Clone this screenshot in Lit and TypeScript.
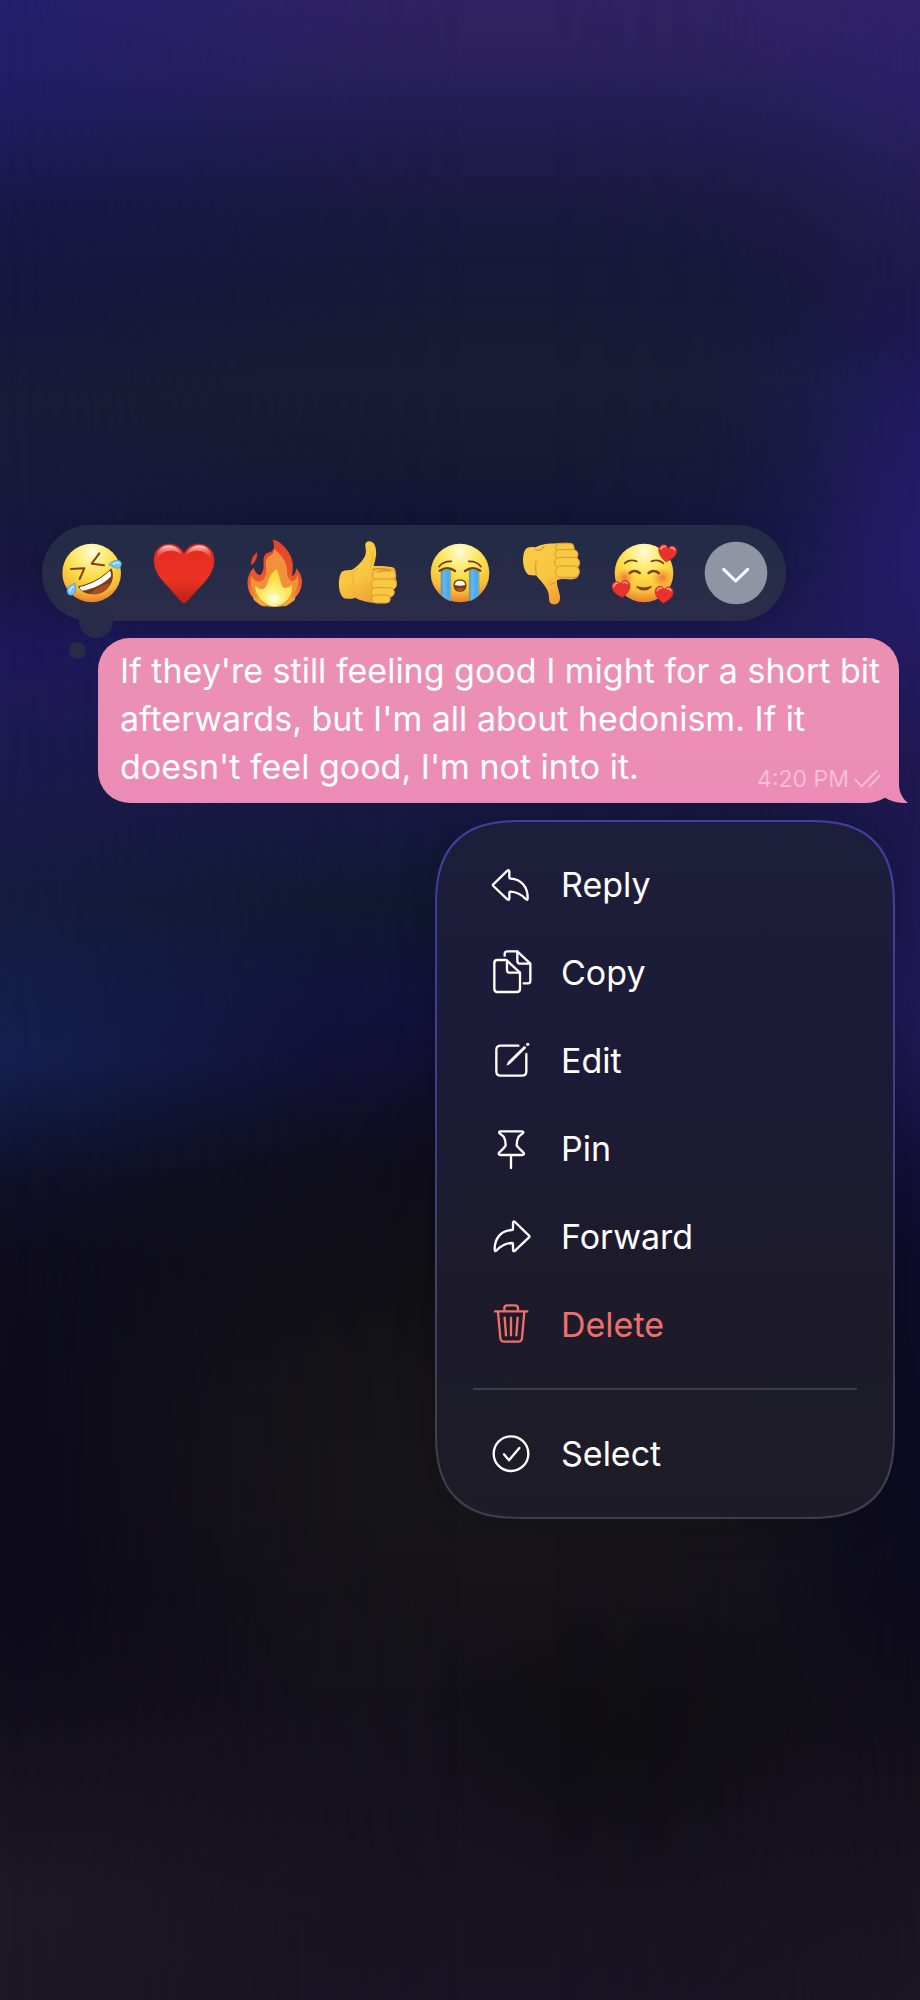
import { LitElement, html, css, svg, nothing, type SVGTemplateResult } from "lit";
import { customElement, property } from "lit/decorators.js";

interface Reaction {
  label: string;
  viewBox: string;
  art: SVGTemplateResult;
}

interface MenuAction {
  label: string;
  viewBox: string;
  art: SVGTemplateResult;
  danger?: boolean;
}

const skin = (id: string) => svg`
  <radialGradient id=${id} cx="0.5" cy="0.14" r="0.88">
    <stop offset="0" stop-color="#fffbdc" />
    <stop offset="0.22" stop-color="#fdf08c" />
    <stop offset="0.5" stop-color="#fbdc45" />
    <stop offset="0.78" stop-color="#f7bb3b" />
    <stop offset="1" stop-color="#e9742a" />
  </radialGradient>`;

const hand = (id: string) => svg`
  <linearGradient id=${id} x1="0" y1="0" x2="0.5" y2="1">
    <stop offset="0" stop-color="#f9cd4a" />
    <stop offset="0.6" stop-color="#f8c640" />
    <stop offset="1" stop-color="#f0a035" />
  </linearGradient>`;

const redHeart = (x: number, y: number, turn: number) => svg`
  <g transform="translate(${x} ${y}) rotate(${turn})">
    <path d="M0 27C-10 20-28 8-27-8C-26-25-7-29 0-14C7-29 26-25 27-8C28 8 10 20 0 27Z" fill="#e8322c" stroke="#c4241f" stroke-width="2" />
    <path d="M-21-9Q-19-19-9-18M8-17Q15-21 20-13" fill="none" stroke="#f79a90" stroke-width="5" stroke-linecap="round" />
  </g>`;

const reactions: Reaction[] = [
  {
    label: "Rolling on the floor laughing",
    viewBox: "78 82 216 216",
    art: svg`
      <defs>${skin("rofl")}</defs>
      <circle cx="185" cy="190" r="88" fill="url(#rofl)" />
      <g fill="none" stroke="#7d4412" stroke-width="6" stroke-linejoin="round" stroke-linecap="round">
        <path d="M208 131L185 162L222 167" />
        <path d="M123 178L163 176L149 208" />
      </g>
      <path d="M144 230C172 226 216 206 244 176C255 199 247 229 222 245C194 261 155 255 144 230Z" fill="#7a3d12" />
      <path d="M149 232C178 226 215 207 239 183Q245 189 243 200C222 223 190 239 156 243Q150 239 149 232Z" fill="#fff" />
      <path d="M182 252C190 238 226 221 243 220C231 246 205 260 182 252Z" fill="#a64d25" />
      <path d="M236 165C249 150 268 149 273 157C277 168 270 177 261 176C252 175 244 168 236 165Z" fill="#76c5f3" stroke="#3b93cf" stroke-width="2" />
      <path d="M135 221C117 226 108 239 112 249C116 258 126 259 132 252C138 244 139 233 135 221Z" fill="#76c5f3" stroke="#3b93cf" stroke-width="2" />
      <path d="M251 163Q260 156 266 160M129 231Q120 238 119 244" fill="none" stroke="#c9ecfd" stroke-width="5" stroke-linecap="round" />`,
  },
  {
    label: "Red heart",
    viewBox: "354 82 216 216",
    art: svg`
      <defs>
        <linearGradient id="heart" x1="0" y1="0" x2="0" y2="1">
          <stop offset="0" stop-color="#e42a22" />
          <stop offset="0.6" stop-color="#ea3323" />
          <stop offset="1" stop-color="#bd2018" />
        </linearGradient>
        <linearGradient id="gloss" x1="0" y1="0" x2="0" y2="1">
          <stop offset="0" stop-color="#ffd9d3" stop-opacity="0.95" />
          <stop offset="1" stop-color="#ee4a3c" stop-opacity="0" />
        </linearGradient>
      </defs>
      <path d="M462 281C449 273 424 241 404 220C384 198 371 176 372 148C373 98 440 85 462 132C484 85 551 98 552 148C553 176 541 198 521 220C500 241 475 273 462 281Z" fill="url(#heart)" stroke="#c3251d" stroke-width="2" />
      <path d="M379 153C380 119 397 107 418 107C438 108 450 121 457 136C436 118 397 115 379 153Z" fill="url(#gloss)" />
      <path d="M545 153C544 119 527 107 506 107C486 108 474 121 467 136C488 118 527 115 545 153Z" fill="url(#gloss)" />`,
  },
  {
    label: "Fire",
    viewBox: "630 82 216 216",
    art: svg`
      <defs>
        <linearGradient id="outer" x1="0" y1="0" x2="0" y2="1">
          <stop offset="0" stop-color="#e5412a" />
          <stop offset="0.65" stop-color="#ea5a2a" />
          <stop offset="1" stop-color="#f3a73b" />
        </linearGradient>
        <radialGradient id="core" cx="0.5" cy="0.8" r="0.6">
          <stop offset="0" stop-color="#fffef0" />
          <stop offset="0.4" stop-color="#fdf07b" />
          <stop offset="1" stop-color="#fbd940" />
        </radialGradient>
      </defs>
      <path d="M727 90C752 90 786 132 788 160Q789 182 786 200Q797 194 799 176C812 190 820 210 814 230Q811 249 796 262Q798 272 783 279C757 296 711 296 684 280Q669 273 669 263C655 250 648 219 656 199Q660 183 671 174Q675 192 691 197Q702 183 701 164C699 148 702 132 714 129Q731 126 732 111Q732 99 727 90Z" fill="url(#outer)" />
      <path d="M681 128C684 144 674 160 664 166Q660 146 681 128Z" fill="#e5452a" />
      <path d="M732 117C752 134 770 154 771 180Q770 204 785 215Q798 214 803 197C811 226 794 258 778 272Q736 300 693 275C670 255 656 225 664 198Q672 215 689 216C708 211 711 187 708 167C706 150 712 141 724 136Q733 131 732 117Z" fill="#f1913a" />
      <path d="M740 179C751 202 750 224 761 235Q774 237 786 225C790 249 776 282 736 290C697 287 674 254 676 226Q684 239 699 239C717 232 710 198 740 179Z" fill="url(#core)" />
      <path d="M668 263Q686 289 707 291L689 266ZM796 262Q779 289 760 291L779 266Z" fill="#f5a637" />`,
  },
  {
    label: "Thumbs up",
    viewBox: "36 82 216 216",
    art: svg`
      <defs>${hand("up")}</defs>
      <path d="M65 187Q73 180 94 181C112 171 134 149 137 132Q139 122 136 108C134 92 157 90 164 106C173 127 167 146 161 169C182 168 201 170 216 172Q230 177 226 191Q231 197 227 207Q233 215 229 226Q226 235 218 237Q226 246 219 256Q213 264 208 265Q213 278 197 281C164 282 128 277 106 264Q91 270 73 266C54 255 52 207 65 187Z" fill="url(#up)" />
      <path d="M157 125Q160 148 153 171M96 187Q108 181 116 174M95 189Q104 224 102 258" fill="none" stroke="#f4b13b" stroke-width="4" />
      <g fill="#f8c943" stroke="#df9631" stroke-width="3">
        <rect x="157" y="179" width="70" height="32" rx="16" />
        <rect x="154" y="208" width="76" height="32" rx="16" />
        <rect x="153" y="234" width="70" height="28" rx="14" />
        <rect x="155" y="256" width="56" height="24" rx="12" />
      </g>
      <path d="M156 180Q183 172 210 181M172 187Q190 181 212 184" fill="none" stroke="#dc922e" stroke-width="4" stroke-linecap="round" />`,
  },
  {
    label: "Loudly crying",
    viewBox: "312 82 216 216",
    art: svg`
      <defs>
        ${skin("cry")}
        <linearGradient id="tear" x1="0" y1="0" x2="1" y2="0">
          <stop offset="0" stop-color="#3f92d5" />
          <stop offset="0.25" stop-color="#64b7f1" />
          <stop offset="0.8" stop-color="#4da5e9" />
          <stop offset="1" stop-color="#6fbbe8" />
        </linearGradient>
      </defs>
      <circle cx="420" cy="190" r="88" fill="url(#cry)" />
      <path d="M363 181H392V274Q375 268 363 257Z" fill="url(#tear)" stroke="#8a9b60" stroke-width="2" />
      <path d="M448 181H477V257Q465 268 448 274Z" fill="url(#tear)" stroke="#8a9b60" stroke-width="2" />
      <g fill="none" stroke="#76400f" stroke-width="7" stroke-linecap="round">
        <path d="M357 171Q369 154 394 155" stroke-width="5" />
        <path d="M483 171Q471 154 446 155" stroke-width="5" />
        <path d="M359 183Q383 167 405 184" />
        <path d="M435 184Q457 167 481 183" />
      </g>
      <path d="M420 209C436 209 441 220 439 231C437 242 430 246 420 246C410 246 403 242 401 231C399 220 404 209 420 209Z" fill="#78400f" />
      <path d="M405 226C405 216 411 213 420 213C429 213 435 216 435 226Q420 230 405 226Z" fill="#fff" />
      <path d="M406 239Q420 231 434 239Q420 250 406 239Z" fill="#aa5127" />`,
  },
  {
    label: "Thumbs down",
    viewBox: "588 82 216 216",
    art: svg`
      <defs>${hand("down")}</defs>
      <path d="M617 118Q625 109 647 113C667 101 699 102 718 101Q741 96 754 103Q766 109 763 122Q777 130 772 147Q783 159 775 174Q783 187 774 201Q765 211 745 209Q724 207 711 211C709 226 717 241 720 260C722 278 712 286 699 284C685 282 688 267 686 254C682 232 663 216 648 197Q637 198 625 195C607 181 604 137 617 118Z" fill="url(#down)" />
      <path d="M646 119Q661 127 672 111M649 154Q643 174 650 194M690 225Q700 217 707 220" fill="none" stroke="#e69b31" stroke-width="4" />
      <g fill="#f8c943" stroke="#df9631" stroke-width="3">
        <rect x="707" y="101" width="55" height="25" rx="12" />
        <rect x="705" y="120" width="69" height="28" rx="14" />
        <rect x="704" y="143" width="75" height="32" rx="16" />
        <rect x="706" y="169" width="72" height="34" rx="17" />
      </g>`,
  },
  {
    label: "Smiling face with hearts",
    viewBox: "54 82 216 216",
    art: svg`
      <defs>
        ${skin("love")}
        <radialGradient id="blush">
          <stop offset="0" stop-color="#f26a2c" stop-opacity="0.85" />
          <stop offset="1" stop-color="#f58a34" stop-opacity="0" />
        </radialGradient>
      </defs>
      <circle cx="162" cy="190" r="88" fill="url(#love)" />
      <circle cx="104" cy="204" r="29" fill="url(#blush)" />
      <circle cx="217" cy="204" r="31" fill="url(#blush)" />
      <g fill="none" stroke="#7b4413" stroke-linecap="round">
        <path d="M104 161Q118 147 140 155" stroke-width="5" />
        <path d="M184 155Q206 147 220 161" stroke-width="5" />
        <path d="M119 190Q133 178 149 190M176 190Q191 178 206 190" stroke-width="8" />
        <path d="M140 231Q162 250 184 231Q162 240 140 231Z" fill="#7b4413" stroke-width="4" />
      </g>
      ${redHeart(232, 130, 10)} ${redHeart(94, 237, -8)} ${redHeart(222, 254, 5)}`,
  },
];

const turnArrow = svg`<path d="M217 253L259 212Q265 208 265 215V232Q265 236 269 236C302 238 320 262 320 293Q320 303 314 297C302 284 288 276 268 275Q265 275 265 278V295Q265 302 259 298L217 258Q214 255 217 253Z" />`;

const actions: MenuAction[] = [
  { label: "Reply", viewBox: "198 183 144 144", art: turnArrow },
  {
    label: "Copy",
    viewBox: "198 447 144 144",
    art: svg`
      <path d="M228 480H256L297 518V567Q297 576 288 576H229Q220 576 220 567V489Q220 480 229 480Z" />
      <path d="M258 482V509Q258 518 267 518H296" />
      <path d="M251 467V462Q251 454 259 454H289L328 491V542Q328 550 320 550H308" />
      <path d="M289 455V482Q289 491 298 491H327" />`,
  },
  {
    label: "Edit",
    viewBox: "198 711 144 144",
    art: svg`
      <path d="M292 737H239Q226 737 226 750V814Q226 827 239 827H303Q316 827 316 814V762" />
      <path d="M256 797L261 785L310 737L316 743L267 792Z" fill="currentColor" stroke="none" />
      <circle cx="320" cy="733" r="5" fill="currentColor" stroke="none" />`,
  },
  {
    label: "Pin",
    viewBox: "198 105 144 144",
    art: svg`
      <path d="M238 124H303Q310 125 305 130L293 140Q287 150 287 166Q291 173 307 187Q312 194 303 195H239Q230 194 235 187Q251 173 254 166Q254 150 248 140L236 130Q232 125 238 124Z" />
      <path d="M270 196V234" />`,
  },
  {
    label: "Forward",
    viewBox: "198 369 144 144",
    art: svg`<g transform="translate(541 184) scale(-1 1)">${turnArrow}</g>`,
  },
  {
    label: "Delete",
    viewBox: "198 633 144 144",
    danger: true,
    art: svg`
      <path d="M222 664H319M250 663V655Q250 646 259 646H282Q291 646 291 655V663" />
      <path d="M231 666L238 744Q239 755 250 755H291Q302 755 303 744L310 666" />
      <path d="M251 683L255 736M270 683V736M290 683L286 736" />`,
  },
  {
    label: "Select",
    viewBox: "198 210 144 144",
    art: svg`<circle cx="270" cy="281" r="52" /><path d="M249 283L264 301L295 264" />`,
  },
];

@customElement("reaction-bar")
class ReactionBar extends LitElement {
  static styles = css`
    :host {
      position: relative;
      display: flex;
      gap: 20px;
      padding: 12px 14px;
      border-radius: 48px;
      background: linear-gradient(#222b46, #2c2c49);
      box-shadow: 0 0 16px rgba(0, 0, 20, 0.12);
    }
    .blob {
      position: absolute;
      border-radius: 50%;
      background: #272b48;
    }
    .large {
      left: 37px;
      bottom: -17px;
      width: 34px;
      height: 34px;
    }
    .small {
      left: 27px;
      bottom: -38px;
      width: 17px;
      height: 17px;
    }
    button {
      position: relative;
      display: block;
      width: 72px;
      height: 72px;
      padding: 0;
      border: 0;
      background: none;
      cursor: pointer;
    }
    svg {
      display: block;
      width: 100%;
      height: 100%;
    }
  `;

  render() {
    return html`
      <span class="blob large"></span>
      <span class="blob small"></span>
      ${reactions.map(
        (r) => html`<button type="button" aria-label=${r.label}>
          <svg viewBox=${r.viewBox} aria-hidden="true">${r.art}</svg>
        </button>`
      )}
      <button type="button" aria-label="More reactions">
        <svg viewBox="330 82 216 216" aria-hidden="true">
          <circle cx="438" cy="190" r="94" fill="#9095a4" />
          <path d="M401 179L437 214L473 179" fill="none" stroke="#fff" stroke-width="9" stroke-linecap="round" stroke-linejoin="round" />
        </svg>
      </button>
    `;
  }
}

@customElement("message-bubble")
class MessageBubble extends LitElement {
  @property() time = "";

  static styles = css`
    :host {
      position: relative;
      display: grid;
      padding: 9px 13px 12px 22px;
      border-radius: 32px;
      background: linear-gradient(#eb90b3, #ec8cb6);
      color: #fff;
    }
    .text,
    .meta {
      grid-area: 1 / 1;
      margin: 0;
    }
    .text {
      font-size: 34px;
      line-height: 48px;
    }
    .meta {
      display: flex;
      align-items: center;
      gap: 5px;
      place-self: end;
      font-size: 23px;
      line-height: 24px;
      color: #f5bfd5;
    }
    .ticks {
      width: 32px;
      height: 20px;
    }
    .tail {
      position: absolute;
      right: -9px;
      bottom: 0;
      width: 30px;
      height: 36px;
    }
  `;

  render() {
    return html`
      <svg class="tail" viewBox="1194 441 90 108" aria-hidden="true">
        <path d="M1257 441V496C1258 518 1268 537 1284 549C1254 550 1230 544 1213 532L1200 500V441Z" fill="#ec8cb6" />
      </svg>
      <p class="text"><slot></slot></p>
      <div class="meta">
        <time>${this.time}</time>
        <svg class="ticks" viewBox="1119 448 96 60" fill="none" stroke="currentColor" stroke-width="6" stroke-linecap="round" stroke-linejoin="round" role="img" aria-label="Read">
          <path d="M1124 481L1142 500L1186 455M1165 500L1208 455" />
        </svg>
      </div>
    `;
  }
}

@customElement("context-menu")
class ContextMenu extends LitElement {
  static styles = css`
    :host {
      display: block;
      box-sizing: border-box;
      padding: 19px 0;
      border: 2px solid transparent;
      border-radius: 68px;
      background:
        linear-gradient(#1d1e3a, #1c1b37 36%, #1d1b2b 66%, #1d1c26) padding-box,
        linear-gradient(#413ea2, #413c92 35%, #45405f 70%, #3f3c50) border-box;
      box-shadow: 0 0 40px rgba(0, 0, 10, 0.2);
    }
    @supports (corner-shape: superellipse(1.4)) {
      :host {
        border-radius: 88px;
        corner-shape: superellipse(1.4);
      }
    }
    ul {
      margin: 0;
      padding: 0;
      list-style: none;
    }
    .divider {
      height: 2px;
      margin: 19px 36px 20px;
      background: #3d3b47;
    }
    button {
      display: flex;
      align-items: center;
      gap: 26px;
      width: 100%;
      height: 88px;
      padding: 0 50px;
      border: 0;
      background: none;
      color: #fff;
      font: inherit;
      font-size: 34px;
      line-height: 48px;
      text-align: left;
      cursor: pointer;
    }
    .danger {
      color: #ef6f6c;
    }
    svg {
      flex: none;
      width: 48px;
      height: 48px;
    }
  `;

  render() {
    return html`
      <ul>
        ${actions.map(
          (a) => html`
            ${a.label === "Select" ? html`<li class="divider" role="separator"></li>` : nothing}
            <li>
              <button type="button" class=${a.danger ? "danger" : ""}>
                <svg viewBox=${a.viewBox} fill="none" stroke="currentColor" stroke-width="7" stroke-linecap="round" stroke-linejoin="round" aria-hidden="true">
                  ${a.art}
                </svg>
                <span>${a.label}</span>
              </button>
            </li>
          `
        )}
      </ul>
    `;
  }
}

@customElement("app-root")
class AppRoot extends LitElement {
  static styles = css`
    :host {
      position: relative;
      isolation: isolate;
      display: flex;
      flex-direction: column;
      box-sizing: border-box;
      min-height: 100vh;
      padding: 525px 0 40px;
      overflow: hidden;
      font-family: Inter, "Liberation Sans", sans-serif;
      background:
        radial-gradient(ellipse 24% 8% at 68% 87%, rgba(13, 13, 15, 0.8), transparent),
        linear-gradient(
          #2f2262, #2c215e 3%, #241e56 5%, #1e1b4a 8%, #1b1a40 10%, #171839 13%, #161936 15%, #191d35 19%,
          #151932 23%, #131536 26%, #151639 28%, #1b1750 32%, #19174a 36%, #171843 40%, #101830 45%,
          #12123a 50%, #120f33 53%, #100e24 56%, #100e19 59%, #111015 64%, #161517 70%, #171618 75%,
          #151318 80%, #131119 85%, #15111e 90%, #17131f 95%, #191423
        );
    }
    :host::before,
    :host::after {
      content: "";
      position: absolute;
      inset: 0;
      z-index: -1;
    }
    :host::before {
      background: linear-gradient(
        #251f6c, #211d62 5%, #1c1a55 8%, #18184a 10%, #15163c 15%, #181c38 20%, #181a3c 24%, #18163f 28%,
        #1d1758 32%, #1e1956 35%, #1a1a4a 40%, #161c3e 45%, #131f4a 50%, #142050 53%, #111b42 55%,
        #0f1029 59%, #0e0c1e 63%, #0d0b1b 70%, #0d0a1a 75%, #0c0a19 80%, #110e1c 85%, #17131f 90%, #1d1825 95%, #1c1723
      );
      mask-image: linear-gradient(90deg, #000, rgba(0, 0, 0, 0.85) 8%, rgba(0, 0, 0, 0.5) 20%, rgba(0, 0, 0, 0.15) 35%, transparent 50%);
    }
    :host::after {
      background: linear-gradient(
        #2f226b, #2b2066 5%, #241c52 10%, #1f194c 14%, #1d1853 17%, #201a5e 20%, #241b66 24%, #251d69 28%,
        #241b62 32%, #211959 35%, #1e184f 40%, #1f1853 45%, #201a58 50%, #1e1850 53%, #1a154a 55%,
        #120f35 59%, #0f0c2c 63%, #0d0b24 70%, #0c0a20 75%, #0c0a1c 80%, #100e18 85%, #14111b 90%, #181420 95%, #1b1622
      );
      mask-image: linear-gradient(270deg, #000, rgba(0, 0, 0, 0.8) 6%, rgba(0, 0, 0, 0.4) 13%, rgba(0, 0, 0, 0.12) 22%, transparent 40%);
    }
    reaction-bar {
      align-self: flex-start;
      margin-left: 42px;
    }
    message-bubble {
      margin: 17px 21px 17px 98px;
    }
    context-menu {
      align-self: flex-end;
      width: 50%;
      min-width: 320px;
      margin-right: 25px;
    }
  `;

  render() {
    return html`
      <reaction-bar></reaction-bar>
      <message-bubble time="4:20 PM">If they're still feeling good I might for a short bit afterwards, but I'm all about hedonism. If it doesn't feel good, I'm not into it.</message-bubble>
      <context-menu></context-menu>
    `;
  }
}
